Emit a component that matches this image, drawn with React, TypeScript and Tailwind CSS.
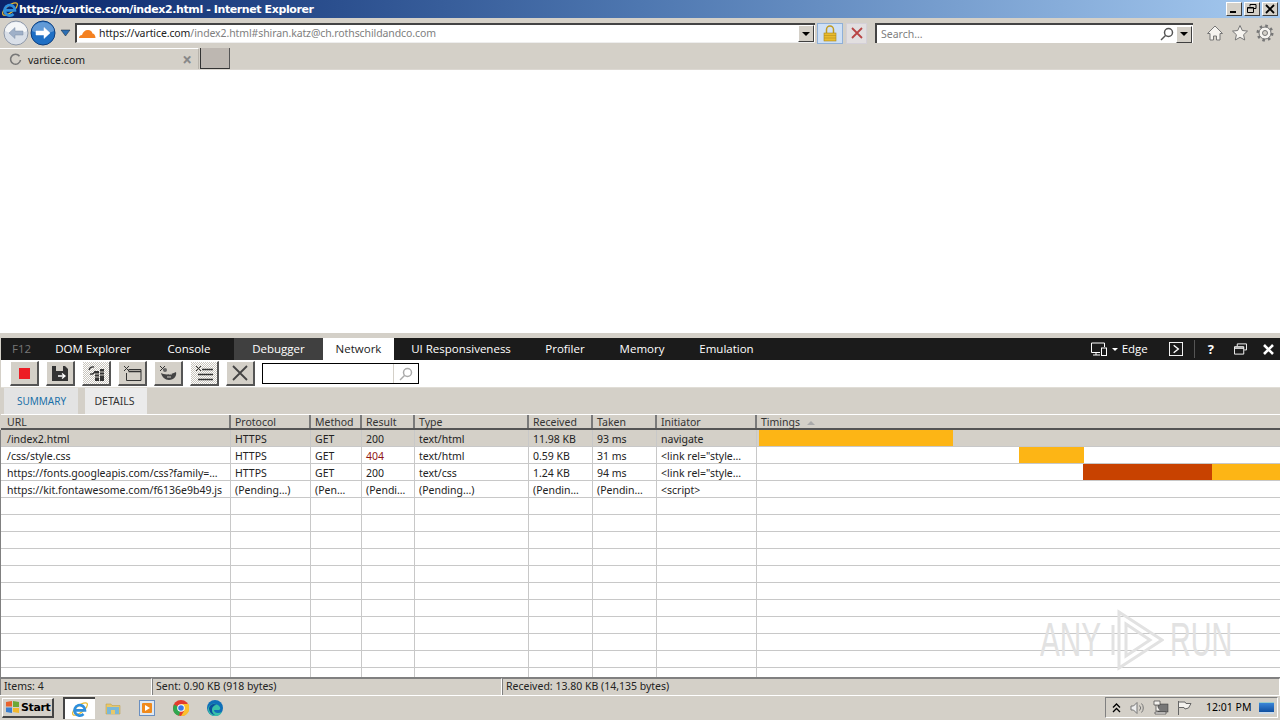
import { ReactNode } from "react";

const COLS = [
  { name: "URL", w: "w-[230px]", pad: "pl-[6px]" },
  { name: "Protocol", w: "w-[80px]", pad: "pl-[4px]" },
  { name: "Method", w: "w-[51px]", pad: "pl-[4px]" },
  { name: "Result", w: "w-[53px]", pad: "pl-[4px]" },
  { name: "Type", w: "w-[114px]", pad: "pl-[4px]" },
  { name: "Received", w: "w-[64px]", pad: "pl-[4px]" },
  { name: "Taken", w: "w-[64px]", pad: "pl-[4px]" },
  { name: "Initiator", w: "w-[100px]", pad: "pl-[4px]" },
];

const ROWS = [
  { cells: ["/index2.html", "HTTPS", "GET", "200", "text/html", "11.98 KB", "93 ms", "navigate"], bars: [{ gap: "w-[2px]", w: "w-[194px]", c: "bg-[#fdb515]" }] },
  { cells: ["/css/style.css", "HTTPS", "GET", "404", "text/html", "0.59 KB", "31 ms", '<link rel="style…'], bars: [{ gap: "w-[262px]", w: "w-[65px]", c: "bg-[#fdb515]" }] },
  { cells: ["https://fonts.googleapis.com/css?family=…", "HTTPS", "GET", "200", "text/css", "1.24 KB", "94 ms", '<link rel="style…'], bars: [{ gap: "w-[326px]", w: "w-[129px]", c: "bg-[#c84200]" }, { gap: "w-0", w: "w-[68px]", c: "bg-[#fdb515]" }] },
  { cells: ["https://kit.fontawesome.com/f6136e9b49.js", "(Pending…)", "(Pen…", "(Pendi…", "(Pending…)", "(Pendin…", "(Pendin…", "<script>"], bars: [] },
  ...Array.from({ length: 11 }, () => ({ cells: ["", "", "", "", "", "", "", ""], bars: [] })),
];

const NAV_TABS = [
  { name: "DOM Explorer", w: "w-[102px]", style: "" },
  { name: "Console", w: "w-[90px]", style: "" },
  { name: "Debugger", w: "w-[89px]", style: "bg-[#404040]" },
  { name: "Network", w: "w-[71px]", style: "bg-white text-[#222]" },
  { name: "UI Responsiveness", w: "w-[134px]", style: "" },
  { name: "Profiler", w: "w-[74px]", style: "" },
  { name: "Memory", w: "w-[80px]", style: "" },
  { name: "Emulation", w: "w-[89px]", style: "" },
];

const IeLogo = ({ size = 18 }: { size?: number }) => (
  <svg width={size} height={size} viewBox="0 0 20 20" fill="none">
    <ellipse cx="10" cy="10" rx="10" ry="4" transform="rotate(-38 10 10)" stroke="#e7b92e" strokeWidth="1.4" />
    <path d="M4.5 11.5h11a5.8 5.8 0 1 0-1.6 4" stroke="#2f8fdc" strokeWidth="3" />
  </svg>
);

const NavArrow = ({ dir, active }: { dir: "left" | "right"; active?: boolean }) => (
  <svg width="26" height="26" viewBox="0 0 26 26">
    <circle cx="13" cy="13" r="12" fill={active ? "#1f6fc4" : "#d9dfe8"} stroke={active ? "#0f3f7e" : "#8e98a8"} />
    <path d="M2 11a11 9 0 0 1 22 0c-6 3-16 3-22 0z" fill="#fff" opacity={active ? 0.3 : 0.7} />
    <path
      d={dir === "left" ? "M6 13l6-5.5v3.5h8v4h-8v3.5z" : "M20 13l-6-5.5v3.5H6v4h8v3.5z"}
      fill={active ? "#fff" : "#9fb0c8"}
      stroke={active ? "#fff" : "#7f8fa6"}
      strokeWidth="0.5"
    />
  </svg>
);

const DropBtn = () => (
  <div className="w-[16px] h-[17px] flex items-center justify-center bg-[#d4d0c8] border-t border-l border-t-white border-l-white border-r border-b border-r-[#404040] border-b-[#404040]">
    <div className="w-0 h-0 border-l-[4px] border-r-[4px] border-t-[4px] border-l-transparent border-r-transparent border-t-black" />
  </div>
);

const ToolBtn = ({ children, hatched }: { children: ReactNode; hatched?: boolean }) => (
  <div
    className={`w-[29px] h-[25px] flex items-center justify-center border-t border-l border-t-white border-l-white border-r-2 border-b-2 border-r-[#555] border-b-[#555] ${hatched ? "bg-[repeating-conic-gradient(#fff_0_25%,#c8c4bc_0_50%)] bg-[length:2px_2px]" : "bg-[#d4d0c8]"}`}
  >
    {children}
  </div>
);

const Status = ({ w, children }: { w: string; children: ReactNode }) => (
  <div className={`${w} h-full shrink-0 flex items-center pl-[3px] pb-[2px] border-t border-l border-t-[#808080] border-l-[#808080] border-r border-r-white`}>
    {children}
  </div>
);

export default function App() {
  return (
    <div className="relative w-[1280px] h-[720px] overflow-hidden flex flex-col bg-[#d4d0c8] text-[10.5px] leading-none text-[#222] font-['Noto_Sans','Open_Sans',sans-serif]">
      {/* title bar */}
      <div className="h-[18px] shrink-0 flex items-center bg-gradient-to-r from-[#0a246a] via-[#4e77b0] to-[#a6caf0]">
        <div className="w-[19px] flex justify-center"><IeLogo size={18} /></div>
        <span className="text-white font-bold text-[11px] font-['DejaVu_Sans',sans-serif] tracking-[-0.4px]">https://vartice.com/index2.html - Internet Explorer</span>
        <div className="ml-auto flex gap-[2px] pr-[2px]">
          <div className="w-[16px] h-[14px] flex items-end justify-start pl-[3px] pb-[2px] bg-[#d4d0c8] border-t border-l border-t-white border-l-white border-r border-b border-r-[#404040] border-b-[#404040]">
            <div className="w-[6px] h-[2px] bg-black" />
          </div>
          <div className="w-[16px] h-[14px] flex items-center justify-center bg-[#d4d0c8] border-t border-l border-t-white border-l-white border-r border-b border-r-[#404040] border-b-[#404040]">
            <svg width="10" height="10" viewBox="0 0 10 10" fill="none" stroke="#000"><path d="M3 2.5V.5h6v4H7M.5 3.5h6v5h-6zM.5 4h6" /></svg>
          </div>
          <div className="w-[16px] h-[14px] flex items-center justify-center bg-[#d4d0c8] border-t border-l border-t-white border-l-white border-r border-b border-r-[#404040] border-b-[#404040]">
            <svg width="10" height="10" viewBox="0 0 10 10" stroke="#000" strokeWidth="1.8"><path d="M1 1l8 8M9 1l-8 8" /></svg>
          </div>
        </div>
      </div>

      {/* address row */}
      <div className="h-[30px] shrink-0 flex items-center pl-[3px]">
        <NavArrow dir="left" />
        <div className="ml-[1px]"><NavArrow dir="right" active /></div>
        <svg className="ml-[4px]" width="11" height="8" viewBox="0 0 11 8"><path d="M1 1h9L5.5 7z" fill="#2c6fb4" stroke="#123" strokeWidth="0.5" /></svg>
        <div className="ml-[4px] w-[740px] h-[20px] flex items-center bg-white border-t-2 border-l-2 border-t-[#444] border-l-[#444] border-b border-b-[#eee] pr-[1px]">
          <svg className="ml-[1px]" width="18" height="10" viewBox="0 0 18 10"><path d="M1 9c0-2 1.5-3 3-3 .8-3 3-5 6-5 2.5 0 4 1.5 4.5 3.5 1.500 0 3 2 3 4.500z" fill="#f48120" /></svg>
          <span className="ml-[3px] text-[#222] tracking-[-0.1px]">https://vartice.com</span>
          <span className="text-[#808080] tracking-[-0.1px]">/index2.html#shiran.katz@ch.rothschildandco.com</span>
          <div className="ml-auto"><DropBtn /></div>
        </div>
        <div className="ml-[2px] w-[26px] h-[21px] flex items-center justify-center bg-[#cfe0f5] border border-[#8fb0d8]">
          <svg width="14" height="17" viewBox="0 0 14 17" fill="none"><path d="M3.5 8V4.5a3.5 3.5 0 0 1 7 0V8" stroke="#c09a20" strokeWidth="1.5" /><rect x="1" y="8" width="12" height="8" fill="#e9bb2d" stroke="#a9861c" strokeWidth="0.6" /><path d="M1 10.5h12M1 13h12" stroke="#b68f1f" strokeWidth="0.6" /></svg>
        </div>
        <div className="ml-[3px] w-[21px] h-[21px] flex items-center justify-center bg-[#e2dfe0] border border-[#d4d0d8]">
          <svg width="12" height="12" viewBox="0 0 12 12" stroke="#b84444" strokeWidth="1.8"><path d="M1 1l10 10M11 1L1 11" /></svg>
        </div>
        <div className="ml-[8px] w-[318px] h-[20px] flex items-center bg-white border-t-2 border-l-2 border-t-[#444] border-l-[#444] pl-[4px] pr-[1px]">
          <span className="text-[#808080]">Search…</span>
          <svg className="ml-auto" width="14" height="14" viewBox="0 0 14 14" fill="none" stroke="#555" strokeWidth="1.5"><circle cx="8.5" cy="5.5" r="4" /><path d="M5.5 8.5L1 13" /></svg>
          <div className="ml-[2px]"><DropBtn /></div>
        </div>
        <div className="ml-[13px] flex items-center gap-[7px]">
          <svg width="18" height="18" viewBox="0 0 18 18" fill="#f6f4f0" stroke="#777"><path d="M9 2L1.5 9.5H4V16h3.5v-4h3v4H14V9.5h2.5z" /></svg>
          <svg width="18" height="18" viewBox="0 0 18 18" fill="#f6f4f0" stroke="#777"><path d="M9 1.5l2.3 5 5.200.6-3.900 3.600 1.100 5.300L9 13.300 4.300 16l1.100-5.300L1.500 7.100l5.200-.6z" /></svg>
          <svg width="18" height="18" viewBox="0 0 18 18" fill="none"><circle cx="9" cy="9" r="7" stroke="#777" strokeWidth="3" strokeDasharray="2.5 3" /><circle cx="9" cy="9" r="6" fill="#f6f4f0" stroke="#777" /><circle cx="9" cy="9" r="2.5" fill="#d4d0c8" stroke="#777" /></svg>
        </div>
      </div>

      {/* tab row */}
      <div className="h-[22px] shrink-0 flex border-b border-b-[#dcd8d2]">
        <div className="w-[199px] h-full flex items-center pl-[9px] pr-[6px] border-t border-t-white border-r border-r-[#b8b4ac]">
          <svg width="13" height="13" viewBox="0 0 13 13" fill="none" stroke="#777" strokeWidth="1.6"><path d="M10.5 3.2A5 5 0 1 0 11.5 7" /></svg>
          <span className="ml-[6px] pt-[2px]">vartice.com</span>
          <span className="ml-auto text-[#888] text-[17px] font-bold">×</span>
        </div>
        <div className="ml-[1px] w-[30px] h-full bg-[#bdb7b1] border-l border-r border-b border-l-[#333] border-r-[#555] border-b-[#333]" />
      </div>

      {/* page area */}
      <div className="h-[263px] shrink-0 bg-white" />

      {/* devtools */}
      <div className="flex-1 flex flex-col min-h-0 border-t-[5px] border-[#d4d0c8] pl-[1px] relative">
        {/* f12 bar */}
        <div className="h-[22px] shrink-0 flex items-center bg-[#1b1b1b] text-white text-[11.5px] font-['Open_Sans',sans-serif]">
          <span className="w-[41px] pl-[11px] text-[#777]">F12</span>
          {NAV_TABS.map((t) => (
            <div key={t.name} className={`${t.w} h-full flex items-center justify-center ${t.style}`}>
              {t.name}
            </div>
          ))}
          <div className="ml-auto flex items-center h-full">
            <svg width="20" height="14" viewBox="0 0 20 14" fill="none" stroke="#fff"><path d="M9 10.5H.5V1h13v4M5 10.5V13M2 13h7" /><rect x="10.5" y="6" width="5" height="7.5" /></svg>
            <div className="ml-[1px] w-0 h-0 border-l-[3px] border-r-[3px] border-t-[3px] border-l-transparent border-r-transparent border-t-white" />
            <span className="ml-[4px]">Edge</span>
            <svg className="ml-[21px]" width="14" height="14" viewBox="0 0 15 15" fill="none" stroke="#fff"><rect x=".5" y=".5" width="14" height="14" /><path d="M5 3.5L10 7.5l-5 4" strokeWidth="1.5" /></svg>
            <div className="ml-[11px] w-px h-[18px] bg-[#555]" />
            <span className="ml-[13px] font-bold text-[13px]">?</span>
            <svg className="ml-[20px]" width="13" height="12" viewBox="0 0 14 12" fill="none" stroke="#fff"><path d="M3.5 3V.5h10V7H11" /><path d="M.5 3.5h10v8H.5z" /><path d="M.5 5h10" strokeWidth="1.5" /></svg>
            <svg className="ml-[16px] mr-[6px]" width="11" height="11" viewBox="0 0 11 11" stroke="#fff" strokeWidth="2.6"><path d="M1 1l9 9M10 1l-9 9" /></svg>
          </div>
        </div>

        {/* toolbar */}
        <div className="h-[27px] shrink-0 flex items-center gap-[7px] pl-[9px] bg-white">
          <ToolBtn><div className="w-[11px] h-[11px] bg-[#ed1c24]" /></ToolBtn>
          <ToolBtn>
            <svg width="18" height="17" viewBox="0 0 18 17"><path d="M1 1h13l3 3v12H1z" fill="#333" /><rect x="5" y="1" width="7" height="5" fill="#d4d0c8" /><path d="M7 11h7M11 8.5l3 2.5-3 2.5" stroke="#fff" fill="none" strokeWidth="1.3" /></svg>
          </ToolBtn>
          <ToolBtn hatched>
            <svg width="18" height="17" viewBox="0 0 18 17"><path d="M2 5a4 4 0 0 1 5-3M8 6a4 4 0 0 1-5 3" stroke="#333" fill="none" strokeWidth="1.3" /><rect x="8" y="6" width="4" height="10" fill="#333" /><rect x="13" y="4" width="4" height="12" fill="#333" /><path d="M13 7h4M13 10h4M8 9h4M8 12h4" stroke="#d4d0c8" /></svg>
          </ToolBtn>
          <ToolBtn>
            <svg width="19" height="17" viewBox="0 0 19 17" fill="none" stroke="#333"><path d="M5.5 4.5H18v11H3.5V8" /><path d="M5.5 6.5H18" strokeWidth="1.5" /><path d="M1 1l5 5M6 1L1 6" /></svg>
          </ToolBtn>
          <ToolBtn>
            <svg width="19" height="17" viewBox="0 0 19 17"><path d="M1 1l5 5M6 1L1 6" stroke="#333" fill="none" /><path d="M2 8c3 2 10 2 15-1 1 4-2 8-7 8-4 0-7-3-8-7z" fill="#444" /><circle cx="6" cy="5" r="2" fill="#666" /><path d="M10 9h3M8 12h4" stroke="#d4d0c8" /></svg>
          </ToolBtn>
          <ToolBtn hatched>
            <svg width="19" height="17" viewBox="0 0 19 17" fill="none" stroke="#333"><path d="M1 1l5 5M6 1L1 6" /><path d="M7 4.5h11M3 9.5h15M3 14.5h15" strokeWidth="1.5" /></svg>
          </ToolBtn>
          <ToolBtn>
            <svg width="16" height="16" viewBox="0 0 16 16" stroke="#444" strokeWidth="1.8"><path d="M1 1l14 14M15 1L1 15" /></svg>
          </ToolBtn>
          <div className="w-[157px] h-[21px] flex items-center bg-white border border-black">
            <div className="flex-1 h-full border-r border-r-[#d4d0c8]" />
            <svg className="mx-[5px]" width="14" height="14" viewBox="0 0 14 14" fill="none" stroke="#aaa" strokeWidth="1.5"><circle cx="8.5" cy="5.5" r="4" /><path d="M5.5 8.5L1 13" /></svg>
          </div>
        </div>

        {/* summary / details tabs */}
        <div className="h-[27px] shrink-0 flex items-end gap-[7px] pl-[3px] border-t border-t-[#e0ddd6]">
          <div className="w-[74px] h-[26px] flex items-center justify-center pl-[1px] bg-[#e3e3e3] text-[#1a70a8] text-[10px]">SUMMARY</div>
          <div className="w-[62px] h-[26px] flex items-center justify-center pr-[3px] bg-[#ebebeb] text-[#333] text-[10.5px]">DETAILS</div>
        </div>

        {/* header */}
        <div className="h-[16px] shrink-0 flex border-t border-t-white border-b-2 border-b-[#555]">
          {COLS.map((c) => (
            <div key={c.name} className={`${c.w} ${c.pad} shrink-0 h-full flex items-center pt-[2px] border-r-2 border-r-[#7a7a7a] text-[#333]`}>{c.name}</div>
          ))}
          <div className="flex-1 flex items-center pt-[2px] pl-[4px] text-[#333]">
            Timings
            <div className="ml-[7px] w-0 h-0 border-l-[4px] border-r-[4px] border-b-[4px] border-l-transparent border-r-transparent border-b-[#aaa]" />
          </div>
        </div>

        {/* rows */}
        <div className="flex-1 min-h-0 overflow-hidden bg-white border-l border-l-[#808080] ml-[-1px]">
          {ROWS.map((r, i) => (
            <div key={i} className={`h-[17px] flex border-b border-b-[#c8c8c8] ${i === 0 ? "bg-[#d4d0c8]" : ""}`}>
              {r.cells.map((cell, j) => (
                <div
                  key={j}
                  className={`${COLS[j].w} ${COLS[j].pad} shrink-0 h-full flex items-center pt-[2px] whitespace-nowrap overflow-hidden border-r border-r-[#c8c8c8] ${cell === "404" ? "text-[#8f1414]" : ""}`}
                >
                  {cell}
                </div>
              ))}
              <div className="flex-1 flex h-full">
                {r.bars.map((b, k) => (
                  <div key={k} className="flex h-full">
                    <div className={b.gap} />
                    <div className={`${b.w} h-full ${b.c}`} />
                  </div>
                ))}
              </div>
            </div>
          ))}
        </div>

        {/* status */}
        <div className="h-[18px] shrink-0 flex border-t border-t-[#808080] ml-[-1px]">
          <Status w="w-[152px]">Items: 4</Status>
          <Status w="w-[350px]">Sent: 0.90 KB (918 bytes)</Status>
          <Status w="w-[778px]">Received: 13.80 KB (14,135 bytes)</Status>
        </div>
      </div>

      {/* taskbar */}
      <div className="h-[25px] shrink-0 flex items-center border-t border-t-white pl-[2px] pb-[1px]">
        <div className="w-[52px] h-[20px] flex items-center pl-[2px] gap-[1px] border-t border-l border-t-white border-l-white border-r-2 border-b-2 border-r-[#444] border-b-[#444]">
          <svg width="15" height="14" viewBox="0 0 15 14"><path d="M1 2l6-1v5.5H1z" fill="#e8622c" /><path d="M8 1l6 1v5H8z" fill="#6ca838" /><path d="M1 7.5h6V13l-6-1z" fill="#3a7fd0" /><path d="M8 8h6v5l-6-1z" fill="#f2b82c" /></svg>
          <span className="font-bold text-[11px] text-black font-['DejaVu_Sans',sans-serif] tracking-[-0.4px]">Start</span>
        </div>
        <div className="ml-[9px] w-[32px] h-[22px] flex items-center justify-center bg-white border-t-2 border-l-2 border-t-[#444] border-l-[#444]">
          <IeLogo size={18} />
        </div>
        <div className="ml-[10px] w-[16px] flex justify-center">
          <svg width="16" height="16" viewBox="0 0 16 16"><path d="M1 4h5l1 1.5h8V14H1z" fill="#e8c86a" stroke="#b89a40" strokeWidth="0.5" /><rect x="2" y="7" width="12" height="7" fill="#7ab8d8" /><rect x="6" y="10" width="4" height="4" fill="#e8c86a" /></svg>
        </div>
        <div className="ml-[18px] w-[16px]">
          <svg width="16" height="16" viewBox="0 0 16 16"><rect x=".5" y=".5" width="15" height="15" fill="#dfe8f2" stroke="#6a8fc0" /><rect x="3" y="3" width="10" height="10" rx="1" fill="#f08a1c" /><path d="M6 5l5 3-5 3z" fill="#fff" /></svg>
        </div>
        <div className="ml-[18px] w-[16px]">
          <svg width="16" height="16" viewBox="0 0 16 16"><circle cx="8" cy="8" r="8" fill="#e33b2e" /><path d="M8 8L1 4.5 0 8a8 8 0 0 0 6 7.8z" fill="#2fa84f" /><path d="M8 4h7.4A8 8 0 0 1 8 16l3-5z" fill="#fbc02d" /><circle cx="8" cy="8" r="3.8" fill="#fff" /><circle cx="8" cy="8" r="2.8" fill="#3b78e7" /></svg>
        </div>
        <div className="ml-[18px] w-[16px]">
          <svg width="16" height="16" viewBox="0 0 16 16"><circle cx="8" cy="8" r="8" fill="#0f6fb8" /><path d="M1 9c1-5 6-6 9-4.5S14.5 9 12 10H7c0 3 4 4 8 2-1.5 3-4 4-7 4-4 0-7-3-7-7z" fill="#38c0a8" /><path d="M2 8c1-4 5-5 8-3-3 0-5 2-5 5 0 2 1 4 3 5-3 0-6-3-6-7z" fill="#0b4f9c" /></svg>
        </div>

        {/* tray */}
        <div className="ml-auto h-[21px] w-[173px] mr-[2px] flex items-center pl-[6px] border-t border-l border-t-[#808080] border-l-[#808080] border-b border-r border-b-white border-r-white">
          <svg width="9" height="10" viewBox="0 0 9 10" fill="none" stroke="#000" strokeWidth="1.3"><path d="M1 4.5L4.5 1 8 4.5M1 9l3.5-3.5L8 9" /></svg>
          <svg className="ml-[9px]" width="16" height="14" viewBox="0 0 16 14" fill="none" stroke="#777"><path d="M1 5h2.5L7 1.500v11L3.500 9H1z" fill="#eee" /><path d="M9.5 4.5a3.5 3.5 0 0 1 0 5M11.5 2.5a6.5 6.5 0 0 1 0 9" /></svg>
          <svg className="ml-[7px]" width="16" height="15" viewBox="0 0 16 15"><rect x="5" y="4" width="10" height="8" fill="#777" stroke="#333" strokeWidth="0.5" /><path d="M1 1h6v4H1zM3 5v6h4M2 12h11v2H2z" fill="#f4f2ee" stroke="#444" strokeWidth="0.7" /></svg>
          <svg className="ml-[7px]" width="16" height="16" viewBox="0 0 16 16" fill="#f4f2ee" stroke="#666"><path d="M2.5 15V1" fill="none" /><path d="M2.5 2H9l1 1.5h5L12.5 8 9 9 8 7.5H2.5z" /></svg>
          <span className="ml-[14px] text-black">12:01 PM</span>
          <div className="ml-[8px] w-[15px] h-[12px] bg-gradient-to-b from-[#3a86d8] to-[#0f4fa0] border-t border-t-[#9cc] border-b-2 border-b-[#c8d8e8]" />
        </div>
      </div>

      {/* any.run watermark */}
      <div className="absolute left-[1040px] top-[609px] h-[62px] flex items-center pointer-events-none text-[#e2e2e2] font-['Liberation_Sans',sans-serif] text-[48px] leading-none">
        <span className="scale-x-[0.62] origin-left w-[68px] whitespace-nowrap">ANY</span>
        <svg width="54" height="62" viewBox="0 0 54 62" fill="none" stroke="#e2e2e2" strokeWidth="3" className="ml-[2px]"><path d="M9 3v56l43-28zM16 15l24 16-24 16z" /><path d="M3 16v30" /></svg>
        <span className="scale-x-[0.6] origin-left w-[62px] ml-[6px] whitespace-nowrap">RUN</span>
      </div>
    </div>
  );
}
